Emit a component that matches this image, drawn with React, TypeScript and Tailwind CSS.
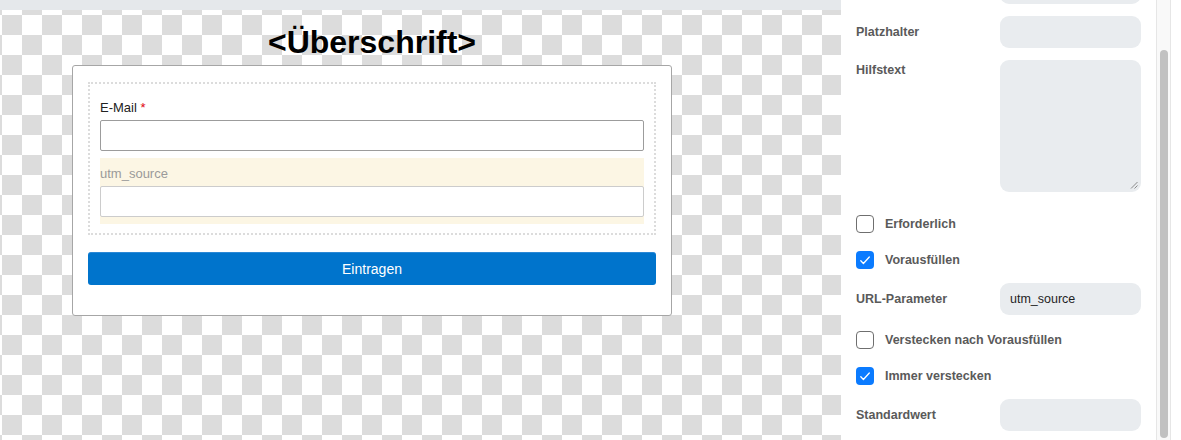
import React from "react";

function Checkbox({ checked }: { checked?: boolean }) {
  if (checked) {
    return (
      <div className="flex h-[18px] w-[18px] shrink-0 items-center justify-center rounded-[4px] bg-[#0b7bff]">
        <svg width="18" height="18" viewBox="0 0 18 18" fill="none">
          <path d="M4.8 9.8 L7.4 12.5 L13.3 6" stroke="#ffffff" strokeWidth="1.3" strokeLinecap="round" strokeLinejoin="round" />
        </svg>
      </div>
    );
  }
  return <div className="h-[18px] w-[18px] shrink-0 rounded-[4px] border border-[#6f6f6f] bg-white" />;
}

function CheckRow({ label, checked, className }: { label: string; checked?: boolean; className: string }) {
  return (
    <div className={className}>
      <div className="flex h-[24px] items-center">
        <Checkbox checked={checked} />
        <span className="ml-[11px] text-[12.5px] font-bold leading-[14px] text-[#5a5a5a]">{label}</span>
      </div>
    </div>
  );
}

function InputRow({ label, value, className }: { label: string; value?: string; className: string }) {
  return (
    <div className={className}>
      <div className="flex items-center">
        <div className="w-[144px] shrink-0 text-[12.5px] font-bold leading-[14px] text-[#5a5a5a]">{label}</div>
        <div className="flex h-[32px] w-[141px] items-center rounded-[9px] bg-[#e9ecef] px-[10px] text-[12.5px] text-[#1f1f1f]">
          {value}
        </div>
      </div>
    </div>
  );
}

export default function App() {
  return (
    <div className="flex h-[440px] w-[1181px] overflow-hidden bg-white font-['Liberation_Sans',Arial,sans-serif]">
      {/* Canvas */}
      <div className="flex w-[841px] shrink-0 flex-col">
        <div className="h-[10px] shrink-0 bg-[#e5e8eb]" />
        <div className="flex-1 bg-white bg-[image:conic-gradient(#dcdcdc_25%,#ffffff_0_50%,#dcdcdc_0_75%,#ffffff_0)] bg-[length:40px_40px] bg-[position:2px_25px] pl-[72px] pt-[14px]">
          <div className="w-[600px]">
            <h1 className="text-center text-[32px] font-bold leading-[37px] text-black">&lt;Überschrift&gt;</h1>
            <div className="mt-[4px] rounded-[3px] border border-[#a6a6a6] bg-white px-[15px] pb-[30px] pt-[16px]">
              <div className="border-2 border-dotted border-[#dcdcdc] px-[10px] pb-[9px] pt-[16px]">
                <div className="text-[13px] leading-[15px] text-[#222222]">
                  E-Mail <span className="text-[#e0000f]">*</span>
                </div>
                <div className="mt-[5px] h-[31px] rounded-[2px] border border-[#9c9c9c] bg-white" />
                <div className="mt-[7px] bg-[#fcf6e4] pb-[7px] pt-[8px]">
                  <div className="text-[13px] leading-[15px] text-[#9a9a9a]">utm_source</div>
                  <div className="mt-[5px] h-[31px] rounded-[2px] border border-[#cccccc] bg-white" />
                </div>
              </div>
              <button className="mt-[17px] flex h-[33px] w-full items-center justify-center rounded-[3px] border-t border-[#2a88d6] bg-[#0074cc] text-[14px] text-white">
                Eintragen
              </button>
            </div>
          </div>
        </div>
      </div>

      {/* Settings panel */}
      <div className="flex w-[340px] shrink-0 bg-white">
        <div className="w-[315px] shrink-0 overflow-hidden px-[15px]">
          <div className="-mt-[28px]">
            <InputRow label="" className="" />
            <InputRow label="Platzhalter" className="mt-[12px]" />
            <div className="mt-[12px] flex items-start">
              <div className="mt-[3px] w-[144px] shrink-0 text-[12.5px] font-bold leading-[14px] text-[#5a5a5a]">Hilfstext</div>
              <div className="flex h-[132px] w-[141px] items-end justify-end rounded-[9px] bg-[#e9ecef] p-[3px]">
                <svg width="8" height="8" viewBox="0 0 8 8" fill="none">
                  <path d="M7.5 1 L1 7.5 M7.5 4.5 L4.5 7.5" stroke="#8a8a8a" strokeWidth="1" />
                </svg>
              </div>
            </div>
            <CheckRow label="Erforderlich" className="mt-[20px]" />
            <CheckRow label="Vorausfüllen" checked className="mt-[12px]" />
            <InputRow label="URL-Parameter" value="utm_source" className="mt-[11px]" />
            <CheckRow label="Verstecken nach Vorausfüllen" className="mt-[13px]" />
            <CheckRow label="Immer verstecken" checked className="mt-[12px]" />
            <InputRow label="Standardwert" className="mt-[11px]" />
          </div>
        </div>
        {/* scrollbar */}
        <div className="flex w-[15px] shrink-0 flex-col border-x border-[#e6e6e6] bg-[#f9f9f9] pb-[2px] pl-[3px] pt-[50px]">
          <div className="w-[8px] flex-1 rounded-full bg-[#c1c1c1]" />
        </div>
        <div className="w-[10px] shrink-0 bg-white" />
      </div>
    </div>
  );
}
